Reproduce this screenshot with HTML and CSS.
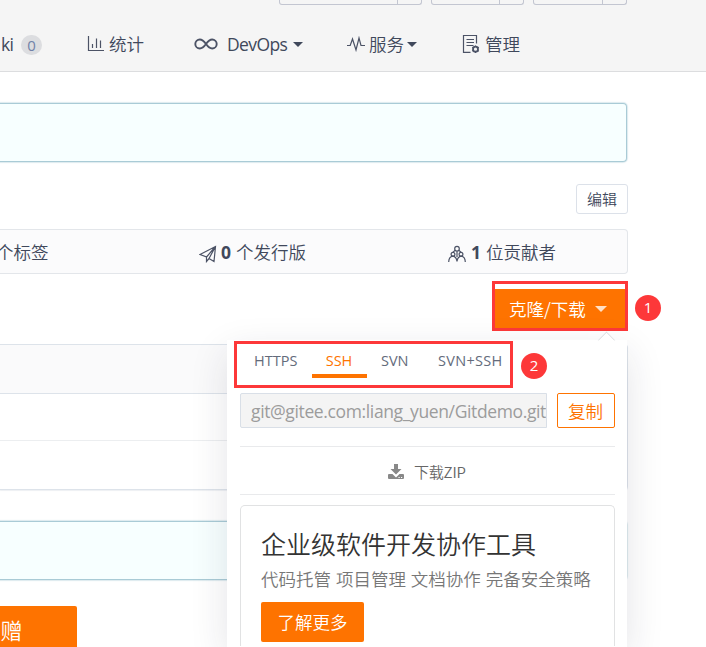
FILE: index.html
```html
<!DOCTYPE html>
<html lang="zh-CN">
<head>
<meta charset="utf-8">
<title>Gitdemo</title>
<link rel="stylesheet" href="styles.css">
</head>
<body>
<header class="header">
  <div class="actions">
    <div class="action action-wide"></div>
    <div class="action"></div>
    <div class="action action-last"></div>
  </div>
  <nav class="nav">
    <a class="nav-item nav-wiki"><span>ki</span><span class="count">0</span></a>
    <a class="nav-item"><svg class="ico" width="17" height="17" viewBox="0 0 17 17"><path d="M1.5 0v14.5H17M5.5 8v4M9.5 2.5V12M13.5 4.500V12"/></svg><span class="label">统计</span></a>
    <a class="nav-item"><svg class="ico infinity" width="24" height="14" viewBox="0 0 24 14"><path d="M12 7C9.500 3.500 8 2.500 5.800 2.500a4.500 4.500 0 0 0 0 9C8 11.500 9.500 10.500 12 7s4-4.500 6.200-4.500a4.500 4.500 0 0 1 0 9C16 11.500 14.500 10.500 12 7z"/></svg><span class="latin devops">DevOps</span><i class="caret"></i></a>
    <a class="nav-item"><svg class="ico pulse" width="18" height="16" viewBox="0 0 18 16"><path d="M0 9.500h3.200L5.500 3l3.500 11L12 2l2 7.500h4"/></svg><span class="label-tight">服务</span><i class="caret caret-near"></i></a>
    <a class="nav-item"><svg class="ico manage" width="18" height="20" viewBox="0 0 18 20"><path d="M8.500 18.300H1.500V1.500h13v8M4.500 5.500h7.500M4.500 8.500h7.500M4.500 11.500h7"/><circle cx="13.500" cy="15.200" r="2.500" stroke-width="1.800"/><path d="M13.500 11.500v1.500M13.500 17.500v1.500M10.300 13.300l1.300.800M15.500 16.400l1.300.800M10.300 17.100l1.300-.800M15.500 14.100l1.300-.800"/></svg><span class="label">管理</span></a>
  </nav>
</header>
<main class="page">
  <div class="notice"></div>
  <div class="edit-row"><button class="edit">编辑</button></div>
  <section class="stats">
    <span class="stat-tags">个标签</span>
    <span class="stat-release"><svg class="ico" width="18" height="18" viewBox="0 0 18 18"><path d="M1 9.500L16.500 1.500 15 16.500 10 13.500 7.500 16.500V12L1 9.500zM7.500 12l9-10.500L10 13.500"/></svg><b>0</b><span>个发行版</span></span>
    <span class="stat-people"><svg class="ico" width="18" height="18" viewBox="0 0 18 18"><circle cx="9" cy="3.700" r="2.300"/><circle cx="5" cy="9.300" r="1.900"/><circle cx="13" cy="9.300" r="1.900"/><path d="M.700 17c.100-3.500 1.500-5.500 4-5.900 2.500.300 4 2.300 4.300 5.400.300-3.100 1.800-5.100 4.300-5.400 2.500.400 3.900 2.400 4 5.900M4.800 7.400L7.200 5.300M13.200 7.400L10.800 5.300M9 6V12"/></svg><b class="people-count">1</b><span>位贡献者</span></span>
  </section>
  <div class="download-row">
    <div class="clone-mark"><button class="clone"><span>克隆/下载</span><i class="caret caret-light"></i></button></div>
    <span class="step">1</span>
    <div class="popup">
      <div class="tabs-row">
        <div class="tabs">
          <a class="tab tab-https">HTTPS</a><a class="tab tab-ssh">SSH</a><a class="tab tab-svn">SVN</a><a class="tab tab-svnssh">SVN+SSH</a>
        </div>
        <span class="step step-two">2</span>
      </div>
      <div class="url-row"><div class="url">git@gitee.com:liang_yuen/Gitdemo.git</div><button class="copy">复制</button></div>
      <a class="zip"><svg width="16" height="16" viewBox="0 0 16 16"><path fill="#888" d="M6 0h4v5h3.500L8 10.500 2.500 5H6zM1 10h3.500L8 13.500 11.500 10H15q1 0 1 1v3q0 1-1 1H1q-1 0-1-1v-3q0-1 1-1z"/><path fill="#fff" d="M10.500 13h1.200v1h-1.200zM13 13h1.200v1H13z"/></svg><span>下载ZIP</span></a>
      <div class="promo">
        <h2>企业级软件开发协作工具</h2>
        <p>代码托管 项目管理 文档协作 完备安全策略</p>
        <button class="more">了解更多</button>
      </div>
    </div>
  </div>
  <section class="files"><div class="files-head"></div><div class="files-row"></div><div class="files-row files-last"></div></section>
  <div class="notice notice-second"></div>
  <button class="donate">赠</button>
</main>
</body>
</html>
```
FILE: styles.css
```css
* { box-sizing: border-box; }
body {
  margin: 0;
  width: 706px;
  height: 647px;
  overflow: hidden;
  background: #fff;
  color: #40485b;
  font: 350 17.5px/26px "Noto Sans CJK SC", sans-serif;
}
button {
  display: block;
  padding: 0;
  margin: 0;
  border: 0;
  font: inherit;
  color: inherit;
  text-align: center;
}
svg { display: block; flex: none; }
.ico { fill: none; stroke: #4c5366; stroke-width: 1.2; }
.header { height: 72px; background: #f5f5f5; border-bottom: 1px solid #dcdddf; }
.actions { display: flex; gap: 9px; height: 5px; padding-left: 279px; }
.action {
  width: 93px;
  height: 5px;
  border: 1px solid #c3c6d1;
  border-top: 0;
  border-radius: 0 0 3px 3px;
  background: linear-gradient(#c3c6d1, #c3c6d1) right 23px top / 1px 5px no-repeat;
}
.action-wide { width: 143px; }
.action-last { width: 94px; }
.nav { display: grid; grid-template-columns: 87px 107px 153px 115px 1fr; height: 66px; padding-top: 6px; }
.nav-item { display: flex; align-items: center; height: 66px; }
.nav-wiki { padding-left: 1px; font-family: "Open Sans", sans-serif; font-weight: 400; letter-spacing: -.8px; }
.count {
  width: 21px;
  height: 20px;
  margin: 1px 0 0 8px;
  border-radius: 10px;
  background: #dcdde0;
  color: #7182a8;
  font-size: 15px;
  font-weight: 400;
  line-height: 20px;
  text-align: center;
  letter-spacing: 0;
}
.label { margin-left: 5px; }
.infinity { stroke-width: 1.900; }
.latin { font-family: "Open Sans", sans-serif; font-weight: 400; }
.devops { margin-left: 9px; letter-spacing: -.6px; }
.caret { margin-left: 6px; border: 5px solid transparent; border-top-color: #40485b; border-bottom: 0; }
.label-tight { margin-left: 4px; }
.caret-near { margin-left: 3px; }
.page { height: 575px; padding-top: 31px; }
.notice {
  width: 627px;
  height: 59px;
  border: 1px solid #a9cbd6;
  border-left: 0;
  border-radius: 0 4px 4px 0;
  background: #f7ffff;
  box-shadow: 0 0 1px 1px rgba(169, 203, 214, .4);
}
.edit-row { display: flex; width: 628px; justify-content: flex-end; margin-top: 22px; }
.edit { width: 52px; height: 30px; border: 1px solid #dce1e9; border-radius: 3px; background: #fff; font-size: 15px; line-height: 28px; }
.stats {
  display: grid;
  grid-template-columns: 199px 249px 1fr;
  width: 628px;
  height: 45px;
  margin-top: 15px;
  border: 1px solid #e3e6ea;
  border-left: 0;
  border-radius: 0 4px 4px 0;
  background: #fbfbfc;
  line-height: 44px;
}
.stat-tags { margin-left: -4px; }
.stat-release, .stat-people { display: flex; align-items: center; }
.stats .ico { margin-top: 3px; }
.stats b { margin: 0 5px 0 4px; font-family: "Open Sans", sans-serif; font-weight: 700; }
.stats .people-count { margin-left: 5px; }
.download-row { position: relative; display: flex; height: 57px; margin: 7px 0 0 492px; }
.clone-mark { width: 136px; height: 50px; border: 3px solid #fd3839; padding-top: 5px; }
.clone { display: flex; align-items: center; width: 130px; height: 39px; padding: 1px 0 0 14px; background: #fe7300; color: #fff; }
.caret-light { margin-left: 9px; border-width: 6px 6px 0; border-top-color: #ffe0c5; }
.step {
  width: 26px;
  height: 26px;
  margin: 14px 0 0 7px;
  border-radius: 50%;
  background: #fd3839;
  color: #fff;
  font: 400 15px/24px "Open Sans", sans-serif;
  text-align: center;
}
.popup {
  position: absolute;
  z-index: 2;
  top: 59px;
  left: -265px;
  width: 400px;
  height: 307px;
  padding: 1px 12px 0 13px;
  background: #fff;
  box-shadow: 0 12px 36px rgba(34, 36, 60, .12);
  clip-path: inset(-60px -60px 0 -60px);
}
.popup::before {
  content: "";
  position: absolute;
  top: -6px;
  left: 373px;
  width: 12px;
  height: 12px;
  border: solid #d8dadd;
  border-width: 1px 0 0 1px;
  background: #fff;
  transform: rotate(45deg);
  clip-path: polygon(0 0, 100% 0, 0 100%);
}
.tabs-row { display: flex; margin-left: -6px; }
.tabs { display: flex; width: 279px; height: 47px; border: 3px solid #fd3839; }
.tab {
  height: 34px;
  color: #646b7b;
  font: 400 14.5px/34px "Open Sans", sans-serif;
  white-space: nowrap;
}
.tab-https { width: 75px; padding-left: 17px; }
.tab-ssh { width: 55px; padding-right: 1px; border-bottom: 4px solid #fe7300; color: #fe7300; text-align: center; }
.tab-svn { width: 70px; padding-left: 14px; }
.tab-svnssh { width: 70px; padding-left: 1px; letter-spacing: .3px; }
.step-two { margin: 12px 0 0 8px; }
.url-row { display: flex; gap: 10px; margin-top: 5px; }
.url {
  width: 307px;
  height: 35px;
  padding-left: 10px;
  overflow: hidden;
  border: 1px solid #d9dfe7;
  border-radius: 2px 0 0 2px;
  background: #f4f4f4;
  color: #9c9c9c;
  font: 400 17.5px/35px "Open Sans", sans-serif;
  letter-spacing: -.37px;
  white-space: nowrap;
}
.copy { width: 58px; height: 35px; padding-right: 1px; border: 1px solid #fe7300; border-radius: 2px; background: #fff; color: #fe7300; line-height: 32px; }
.zip {
  display: flex;
  align-items: center;
  height: 49px;
  margin-top: 18px;
  padding: 3px 0 0 148px;
  border: solid #e9eaec;
  border-width: 1px 0;
  color: #666;
  font-size: 15px;
}
.zip span { margin-left: 10px; letter-spacing: -.2px; }
.promo { height: 141px; margin-top: 10px; padding: 19px 20px 0; border: 1px solid #e1e2e3; border-bottom: 0; border-radius: 5px 5px 0 0; white-space: nowrap; }
.promo h2 { margin: 0; color: #333; font-size: 25px; font-weight: 350; line-height: 36px; }
.promo p { margin: 5px 0 10px; color: #777; line-height: 26px; word-spacing: 1px; }
.more { width: 103px; height: 40px; border-radius: 2px; background: #fe7300; color: #fff; line-height: 40px; }
.files { width: 628px; height: 146px; margin-top: 6px; border: 1px solid #dde3ea; border-left: 0; border-radius: 0 4px 4px 0; box-shadow: 0 1px 1px #eef0f3; }
.files-head { height: 49px; border-bottom: 1px solid #dde3ea; background: #fafafb; }
.files-row { height: 47px; border-bottom: 1px solid #eceef0; }
.files-last { border: 0; }
.notice-second { margin-top: 31px; }
.donate { width: 77px; height: 41px; margin-top: 26px; padding-right: 54px; border-radius: 0 2px 0 0; background: #fe7300; color: #fff; font-size: 22px; line-height: 46px; }
```
